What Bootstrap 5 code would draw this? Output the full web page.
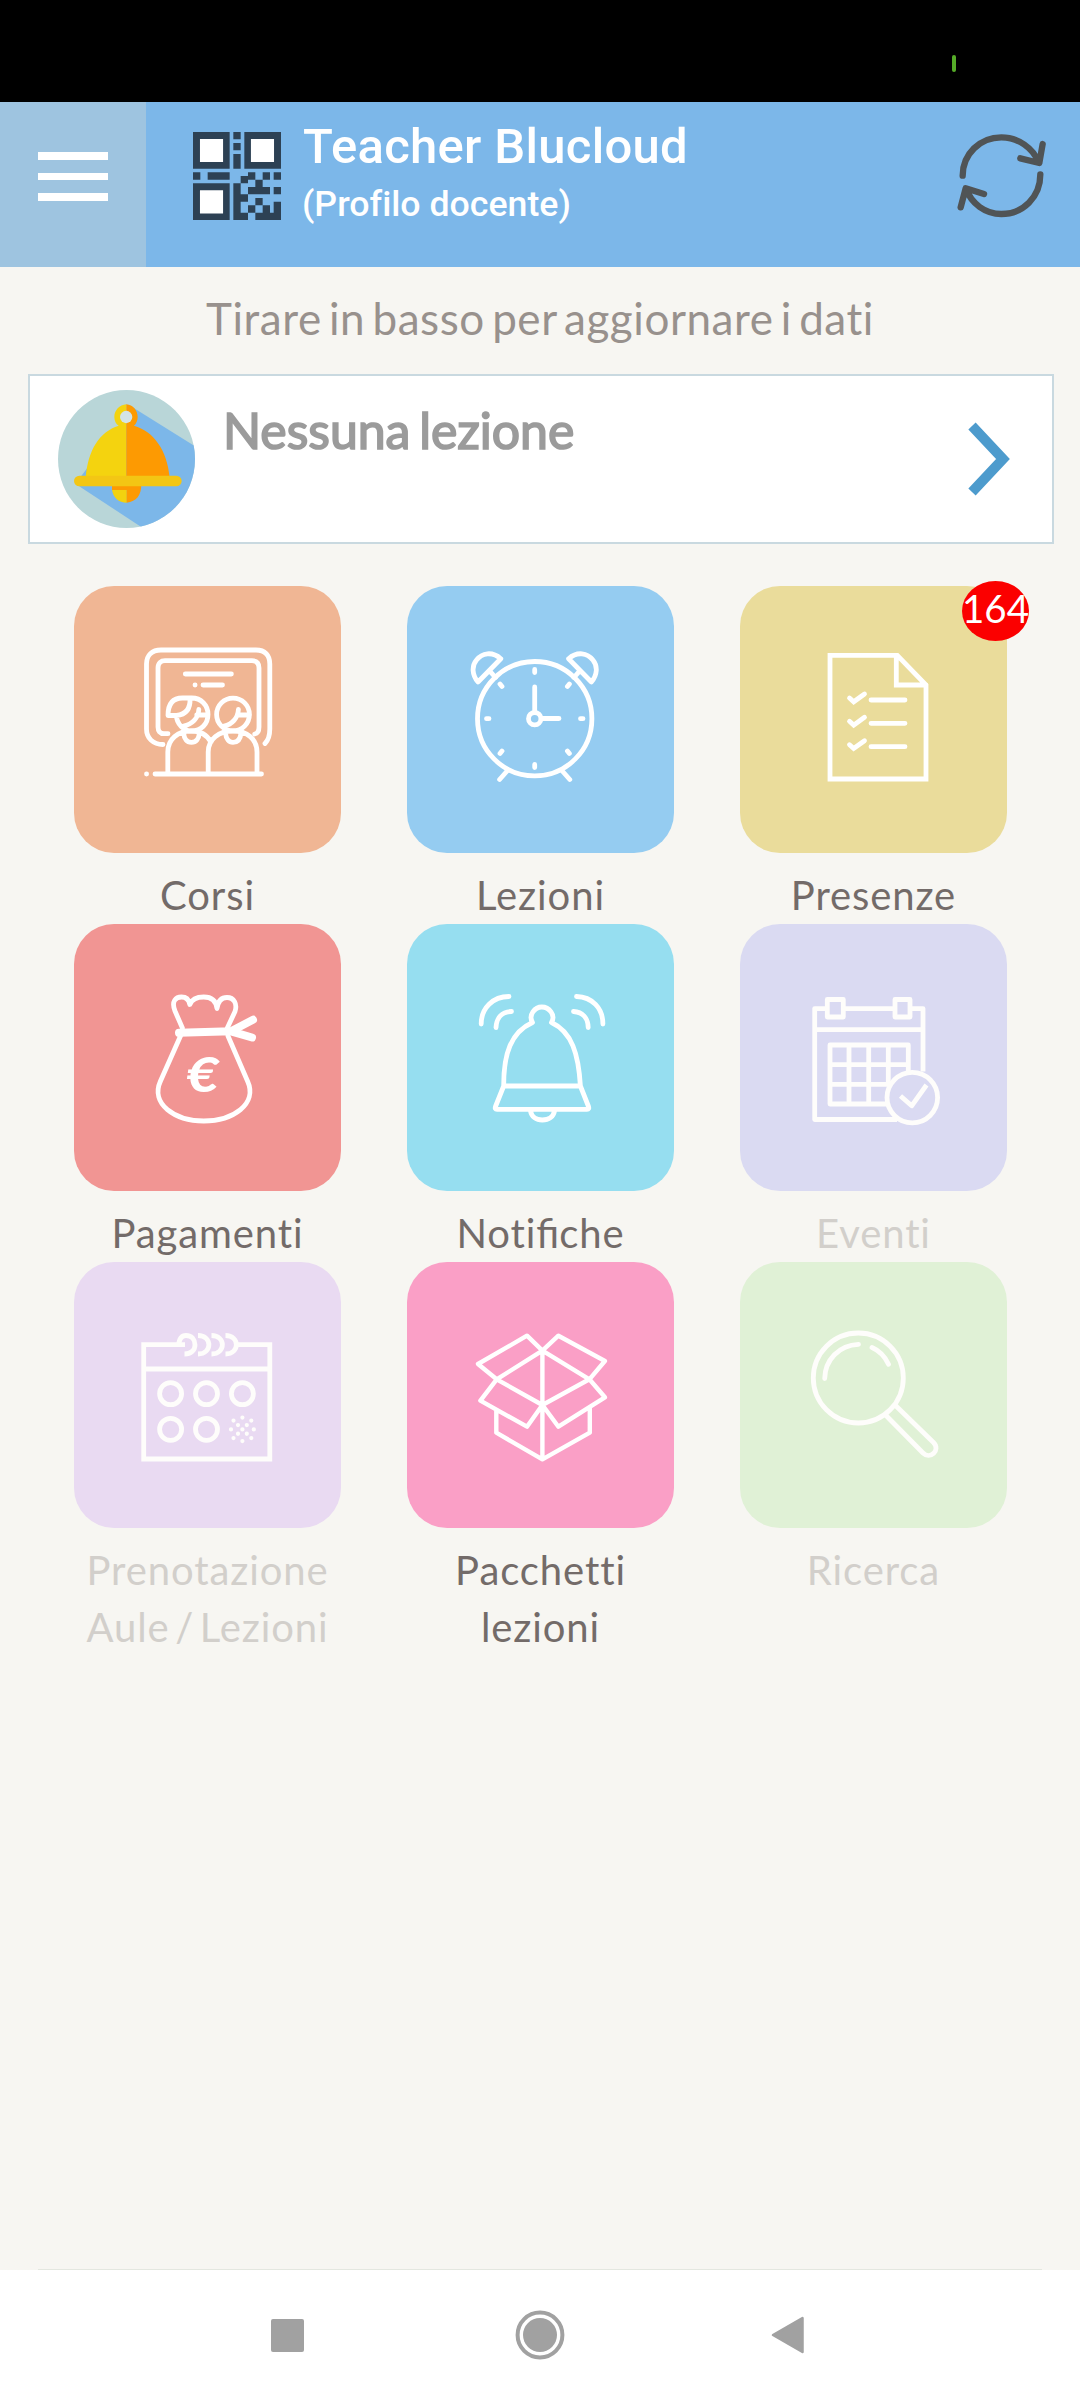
<!DOCTYPE html>
<html lang="it">
<head>
<meta charset="utf-8">
<meta name="viewport" content="width=device-width, initial-scale=1">
<title>Teacher Blucloud</title>
<link href="https://cdn.jsdelivr.net/npm/bootstrap@5.3.0/dist/css/bootstrap.min.css" rel="stylesheet">
<style>
  body { background: #f7f6f2; font-family: Lato, "Liberation Sans", sans-serif; height: 2400px; overflow: hidden; font-variant-ligatures: none; }
  svg { display: block; overflow: visible; }
  .status-strip { height: 102px; background: #000; padding: 55px 124px 0 0; }
  .status-tick { width: 4.500px; height: 17px; border-radius: 2px; background: #55ab28; }
  .app-header { height: 164.500px; background: #7cb7e9; font-family: Roboto, sans-serif; color: #fff; }
  .menu-btn { width: 146px; background: #9ec4e0; padding: 50px 38px 0; gap: 13px; border: 0; }
  .menu-btn span { height: 7.6px; width: 70px; background: #fff; }
  .qr { margin: 30px 0 0 47px; }
  .titles { margin: 15px 0 0 22px; font-weight: 500; white-space: nowrap; }
  .title-main { font-size: 49px; line-height: 60px; letter-spacing: .3px; }
  .title-sub { font-size: 35.7px; line-height: 46px; margin-top: 4px; margin-left: -1px; }
  .reload { margin: 32px 34px 0 0; }
  .pull-hint { font-size: 44px; line-height: 62px; height: 107.500px; padding-top: 20.500px; color: #98918d; letter-spacing: .55px; word-spacing: -4.500px; }
  .lesson-card { margin: 0 26px 0 28px; height: 170px; border: 2px solid #c9d9e0; border-radius: 0; background: #fff; padding: 14px 42px 0 28px; }
  .lesson-text { margin: 10px 0 0 28px; font-size: 50px; line-height: 60px; color: #9b9b9b; -webkit-text-stroke: 1.7px #9b9b9b; letter-spacing: -.05px; word-spacing: -4px; }
  .lesson-arrow { margin-top: 32px; }
  .menu-grid { margin: 42px 40px 0 41px; }
  .menu-tile { width: 267px; height: 267px; border-radius: 40px; }
  .menu-tile svg { fill: none; stroke: #fff; stroke-width: 4.8; stroke-linecap: round; stroke-linejoin: round; }
  .menu-tile .solid { fill: #fff; stroke: none; }
  .menu-tile text { font: italic 900 47px Lato, sans-serif; }
  .menu-tile.low-tile { height: 266px; }
  .tile-name { width: 267px; font-size: 40px; line-height: 57px; padding-top: 14px; text-align: center; color: #736b69; letter-spacing: .9px; word-spacing: -5.500px; }
  .lig { font-variant-ligatures: normal; letter-spacing: 0; }
  .faded { color: #d2cfcb; }
  .menu-tile.faded-icon svg { stroke: #fefdfb; }
  .c-corsi { background: #f0b694; } .c-lezioni { background: #95ccf1; } .c-presenze { background: #eadc9b; }
  .c-pagamenti { background: #f19593; } .c-notifiche { background: #96def0; } .c-eventi { background: #dadaf2; }
  .c-aule { background: #e9daf2; } .c-pacchetti { background: #fa9fc6; } .c-ricerca { background: #e0f1d6; }
  .count-badge { top: -5px; left: 222px; width: 67px; height: 60px; border-radius: 50%; background: #fb0000; color: #fff; font-size: 38.500px; line-height: 55px; text-align: center; }
  .sys-nav { height: 130px; background: #fff; padding: 0 275px 0 271px; }
  .sys-line { height: 1px; margin: 0 38px; background: #e4e7e0; }
</style>
<script src="https://cdn.jsdelivr.net/npm/bootstrap@5.3.0/dist/js/bootstrap.bundle.min.js"></script>
</head>
<body class="d-flex flex-column">

<div class="status-strip d-flex justify-content-end"><div class="status-tick"></div></div>

<header class="app-header d-flex align-items-stretch">
  <button class="menu-btn d-flex flex-column" aria-label="Menu"><span></span><span></span><span></span></button>
  <div class="qr">
    <svg width="88" height="88" viewBox="0 0 24 24">
      <path fill="#2d4154" d="M0 0h10v10H0zM11 0h2v2h-2zM11 3h2v2h-2zM11 6h2v4h-2zM14 0h10v10H14zM0 11h2v2H0zM4 11h6v2H4zM0 14h10v10H0zM11 14h2v10h-2zM15 11h2v2h-2zM19 11h2v2h-2zM22 11h2v2h-2zM13 12h2v2h-2zM17 13h2v2h-2zM15 15h6v2h-6zM22 15h2v2h-2zM13 17h2v2h-2zM17 18h2v2h-2zM15 20h2v2h-2zM19 20h2v2h-2zM22 19h2v5h-7v-2h5zM13 22h2v2h-2z"/>
      <path fill="#fff" d="M1.9 1.9h6.3v6.3H1.9zM15.8 1.9h6.3v6.3h-6.3zM1.9 15.9h6.3v6.3H1.9z"/>
    </svg>
  </div>
  <div class="titles flex-grow-1">
    <div class="title-main">Teacher Blucloud</div>
    <div class="title-sub">(Profilo docente)</div>
  </div>
  <div class="reload">
    <svg width="88" height="84" viewBox="52 283 264 252" fill="none" stroke="#505456" stroke-width="19" stroke-linecap="round" stroke-linejoin="round">
      <path d="M66 408C66 343 118 293 182 293C232 293 278 325 294 369M239 356L296 370L306 313M299 404C299 473 247 523 182 523C134 523 92 492 76 447M60 503L75 446L130 463"/>
    </svg>
  </div>
</header>

<main class="flex-grow-1">
  <div class="pull-hint text-center">Tirare in basso per aggiornare i dati</div>

  <div class="lesson-card card flex-row">
    <svg width="137" height="138" viewBox="114 75 411 414">
      <defs><clipPath id="disc"><ellipse cx="319.500" cy="282" rx="205.500" ry="207"/></clipPath></defs>
      <g clip-path="url(#disc)">
        <path fill="#b9d6d8" d="M110 70h420v420H110z"/>
        <path fill="#7cb7e9" d="M340 128L530 247V500H385L166 356z"/>
      </g>
      <path fill="#f4d30f" d="M319.500 118C298 120 283 136 283 156C283 168 288 177 296 182C238 200 204 255 197 338H319.500z"/>
      <path fill="#fd9a02" d="M319 118C339 120 353 136 353 156C353 166 349 176 342 182C400 198 442 255 449 338H319z"/>
      <circle cx="318.500" cy="156" r="18.500" fill="#d3e3e6"/>
      <path fill="#f2d20f" d="M276 374H320.500V413C296 413 279 397 276 374z"/>
      <path fill="#fd9a02" d="M276 358H364C364 391 350 410 320 413V375H276z"/>
      <rect x="162" y="332" width="323" height="32" rx="16" fill="#f3c614"/>
    </svg>
    <div class="lesson-text flex-grow-1">Nessuna lezione</div>
    <svg class="lesson-arrow" width="43" height="74" viewBox="0 0 43 74" fill="none" stroke="#4d9bcd" stroke-width="10"><path d="M5 4L36 37L5 70"/></svg>
  </div>

  <div class="menu-grid row g-0">
    <div class="col-4 d-flex flex-column align-items-center">
      <div class="menu-tile c-corsi">
        <svg width="267" height="267">
          <path d="M89 158.500C79 158.500 72.500 152 72.500 143V78C72.500 69 78 64 87 64H182C191 64 195.800 69 195.800 78V143C195.800 150 194.500 154 191 157.500"/>
          <path d="M94 147.700H90C86 147.700 84 145 84 141V82C84 77 87 74.700 91 74.700H178C182.500 74.700 185 77 185 82V141C185 145 183.500 147.500 180.700 148"/>
          <path d="M111.300 88H157.400M121 99h.1M129 99H148.500M72.500 188h.1M81 188H187.500"/>
          <circle cx="159" cy="128.500" r="16.400"/>
          <path d="M108.500 112C98 112 94 119 94 129.500H102.500C102.500 138 110 145 117.700 145C127 145 134 138 134 128.500C134 119 127 112 117.700 112H108.500M116 112.500C116.500 123 112 128.500 102.500 129.500M124.800 123.500C124.500 132 118 138.500 109.500 140M122.700 129H133.500M164.400 123.500C164 132 158 138.500 150 140M163.500 129H175"/>
          <path d="M93.800 187V166C93.800 153 104 145 117.400 145C126 145 133 149 137 156M134.200 187V166C134.200 153 145 145 159 145C173 145 183 153 183 166V187M109.700 147C110 153 113 156.300 117.400 156.300C122 156.300 125 153 125.300 147M151.500 147C152 153 155 156.300 159 156.300C163.500 156.300 166.500 153 167 147"/>
        </svg>
      </div>
      <div class="tile-name">Corsi</div>
    </div>
    <div class="col-4 d-flex flex-column align-items-center">
      <div class="menu-tile c-lezioni">
        <svg width="267" height="267">
          <circle cx="127.700" cy="132.700" r="57.200"/><circle cx="127.700" cy="132.700" r="6.200"/>
          <path d="M127.700 126V101M134.500 132.500H152M127.700 83.500V86.500M127.700 178.500V181.500M79.500 132.700H82M173.500 132.700H176M93 98L95 100.500M162.400 98L160.400 100.500M93 167.500L95 165M162.400 167.500L160.400 165"/>
          <path d="M93.800 72.700C85 65 75 67 69.500 74C64.500 80 65 89 71 96zM82.400 84.700L88.500 91.500M101 184L92.600 193.500"/>
          <path d="M161.600 72.700C170.400 65 180.400 67 185.900 74C190.900 80 190.400 89 184.400 96zM173 84.700L166.900 91.500M154.400 184L162.800 193.500"/>
        </svg>
      </div>
      <div class="tile-name">Lezioni</div>
    </div>
    <div class="col-4 d-flex flex-column align-items-center">
      <div class="menu-tile c-presenze position-relative">
        <svg width="267" height="267" style="stroke-linejoin:miter">
          <path d="M90 69.300H157.300L186 99V193H90zM156.300 69.300V99H186"/>
          <path d="M131 114H165M131 137.300H165M131 160.700H165M109.500 112L113.700 115.800L124.500 108M109.500 135.300L113.700 139.100L124.500 131.300M109.500 158.700L113.700 162.500L124.500 154.700"/>
        </svg>
        <div class="count-badge position-absolute">164</div>
      </div>
      <div class="tile-name">Presenze</div>
    </div>

    <div class="col-4 d-flex flex-column align-items-center">
      <div class="menu-tile c-pagamenti">
        <svg width="267" height="267">
          <path d="M106.500 112L86.500 157C76 180 101 197 129.700 197C159 197 184 180 173.500 157L154 112"/>
          <path d="M108.400 104L101 87C97 77 102 73 107.500 73C112 73 115 76 115.800 80.500C118 75 124 73 129.700 73C137 73 142 76 143 84.500C144 77 148 73.500 153 73.500C160 73.500 163.500 80 161 87.500L153.300 104"/>
          <path stroke-width="8" d="M105 108.800L157 107.300L179 95.800M157 107.300L178 113.500"/>
          <text class="solid" transform="translate(112.500 168) scale(1.180 1)">€</text>
        </svg>
      </div>
      <div class="tile-name">Pagamenti</div>
    </div>
    <div class="col-4 d-flex flex-column align-items-center">
      <div class="menu-tile c-notifiche">
        <svg width="267" height="267">
          <path d="M74.200 100C74.200 84 86 72.500 102 72.500M89 103.500C89.500 94 95 87.500 104.500 87.500M195.900 100C195.900 84 185 73 169.500 72.500M181.200 103.500C181 94 175.500 88 166.500 87.500"/>
          <path d="M125.500 98.500C121 91 128 83 134.800 83C142 83 149 91 144.500 98.500C165 108 171.500 130 173.400 162L181.500 182.500Q182.500 185.300 180 185.300H90Q87.500 185.300 88.500 182.500L96.700 162C96.500 130 104 108 125.500 98.500zM96.700 162H173.400M123.500 187C124.500 192.500 129 196 135.300 196C142 196 146.500 192.500 147.500 187"/>
        </svg>
      </div>
      <div class="tile-name">Noti<span class="lig">fi</span>che</div>
    </div>
    <div class="col-4 d-flex flex-column align-items-center">
      <div class="menu-tile c-eventi faded-icon">
        <svg width="267" height="267" style="stroke-linecap:butt">
          <path d="M87.300 84.600H74.700V195.500H157M103.300 84.600H155M170 84.600H183V147.500M74.700 105.700H183"/>
          <path d="M87.300 75.500H103.300V93H87.300zM155 75.500H170V93H155z"/>
          <path d="M168.300 147V121H90V180H147M109 121V180M128.700 121V180M148.300 121V159M90 140.600H168.300M90 160.300H150"/>
          <circle cx="172.300" cy="173.600" r="25.300"/><path d="M160.500 172L171.700 181.800L186.500 161"/>
        </svg>
      </div>
      <div class="tile-name faded">Eventi</div>
    </div>

    <div class="col-4 d-flex flex-column align-items-center">
      <div class="menu-tile low-tile c-aule faded-icon">
        <svg width="267" height="266" style="stroke-linejoin:miter;stroke-linecap:butt">
          <path d="M111 82.700H69.700V197H195.800V82.700H164M69.700 107H195.800"/>
          <path d="M104.500 84C105 77 108 73.500 112 73.500C118 73.500 121 78 121 83C121 88 117 92 110.500 92M124 73.500C138.500 73.500 138.500 92 124 92M137.500 73.500C152 73.500 152 92 137.500 92M151.500 73.500C166 73.500 166 92 151.500 92"/>
          <circle cx="96.600" cy="131.700" r="11"/><circle cx="132.500" cy="131.700" r="11"/><circle cx="168.400" cy="131.700" r="11"/>
          <circle cx="96.600" cy="167.300" r="11"/><circle cx="132.500" cy="167.300" r="11"/>
          <path stroke-width="4.200" stroke-linecap="round" d="M168.400 155.500v.1M159.500 158.500v.1M177.300 158.500v.1M164 163v.1M172.800 163v.1M157 167.300v.1M168.400 167.300v.1M179.800 167.300v.1M164 171.700v.1M172.800 171.700v.1M159.500 176v.1M177.300 176v.1M168.400 179v.1"/>
        </svg>
      </div>
      <div class="tile-name faded">Prenotazione Aule / Lezioni</div>
    </div>
    <div class="col-4 d-flex flex-column align-items-center">
      <div class="menu-tile low-tile c-pacchetti">
        <svg width="267" height="266">
          <path stroke-width="4.400" d="M135.400 88.700L120 73.700L71 102L89.700 117.300L73.400 138.700L120 164.700L135.400 143L151.400 164.700L197.900 135.300L182.400 117.300L197.900 99L151.400 73.700zL89.700 117.300L135.400 143L182.400 117.300zV197.300M89.300 148V170.700L135.400 197.300L182.800 170.700V146.500"/>
        </svg>
      </div>
      <div class="tile-name px-4">Pacchetti lezioni</div>
    </div>
    <div class="col-4 d-flex flex-column align-items-center">
      <div class="menu-tile low-tile c-ricerca faded-icon">
        <svg width="267" height="266">
          <circle cx="118.300" cy="116" r="45"/>
          <path d="M84.700 116.500C85 98 99 83 118.500 82.300M132 85.500C139 88.500 145 94.500 148.500 102.300M155.500 143.500L193.500 180.500C201 188 190 198 183 191L146.500 154"/>
        </svg>
      </div>
      <div class="tile-name faded">Ricerca</div>
    </div>
  </div>
</main>

<div class="sys-line"></div>
<nav class="sys-nav d-flex justify-content-between align-items-center">
  <svg width="33" height="33"><rect width="33" height="33" rx="2" fill="#a1a1a1"/></svg>
  <svg width="50" height="50"><circle cx="28" cy="25" r="22.400" fill="none" stroke="#a1a1a1" stroke-width="4"/><circle cx="28" cy="25" r="17" fill="#a1a1a1"/></svg>
  <svg width="35" height="38"><path d="M3 19L32.500 2V36z" fill="#a1a1a1" stroke="#a1a1a1" stroke-width="2.500" stroke-linejoin="round"/></svg>
</nav>
</body>
</html>
